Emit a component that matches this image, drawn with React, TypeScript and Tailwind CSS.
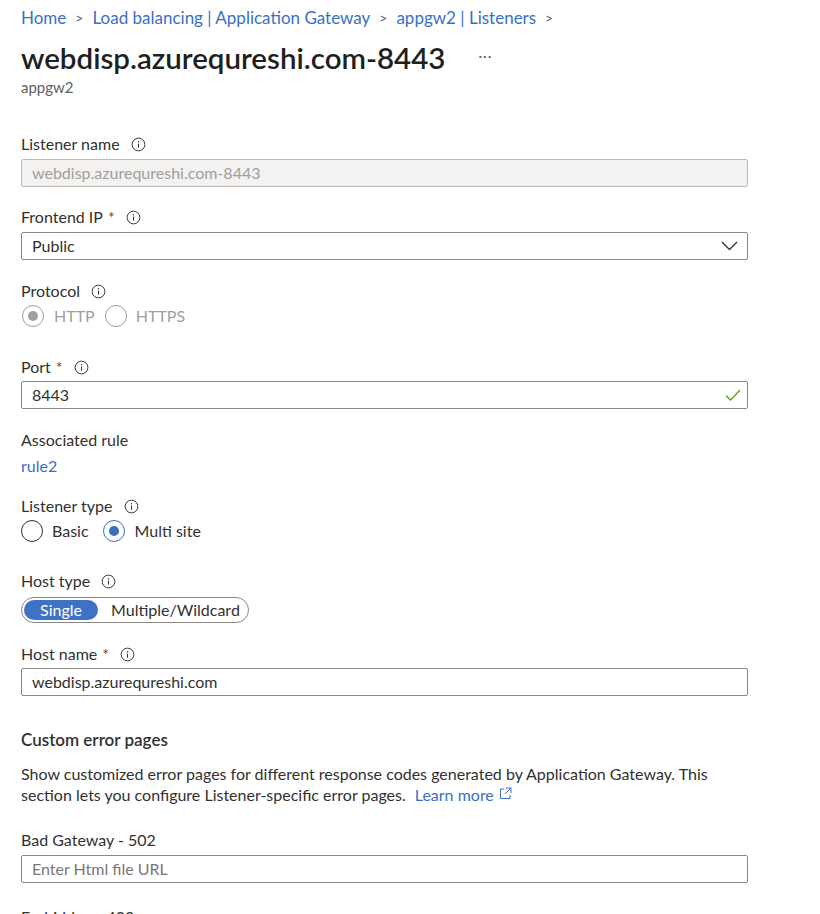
import React from "react";

const font = { fontFamily: "Lato, 'Open Sans', sans-serif" };

function Info() {
  return (
    <svg width="15" height="15" viewBox="0 0 16 16" className="ml-[11px] shrink-0">
      <circle cx="8" cy="8" r="6.8" fill="none" stroke="#323130" strokeWidth="1" />
      <circle cx="8" cy="5.1" r="0.75" fill="#323130" />
      <path d="M8 7v4.4" stroke="#323130" strokeWidth="1.1" />
    </svg>
  );
}

function Label({ text, req, info }: { text: string; req?: boolean; info?: boolean }) {
  return (
    <div className="flex items-center h-[22px] text-[16px] leading-[22px] text-[#323130]">
      <span>{text}</span>
      {req && <span className="text-[#a4262c] ml-[5px]">*</span>}
      {info && <Info />}
    </div>
  );
}

function Radio({ checked, disabled, blue }: { checked?: boolean; disabled?: boolean; blue?: boolean }) {
  const border = disabled ? "border-[#a19f9d]" : blue ? "border-[#3b6fc4]" : "border-[#323130]";
  return (
    <span className={`w-[22px] h-[22px] rounded-full border ${border} flex items-center justify-center bg-white shrink-0`}>
      {checked && (
        <span className={`w-[10px] h-[10px] rounded-full ${disabled ? "bg-[#a19f9d]" : "bg-[#3b6fc4]"}`} />
      )}
    </span>
  );
}

export default function App() {
  return (
    <div className="w-[820px] h-[914px] overflow-hidden bg-white pl-[21px]" style={font}>
      <div className="pt-[6px] flex items-center h-[30px] text-[17px] leading-[24px] text-[#3b6fc4]">
        <span>Home</span>
        <span className="mx-[9px] text-[#605e5c] text-[14px]">&gt;</span>
        <span>Load balancing | Application Gateway</span>
        <span className="mx-[9px] text-[#605e5c] text-[14px]">&gt;</span>
        <span>appgw2 | Listeners</span>
        <span className="mx-[9px] text-[#605e5c] text-[14px]">&gt;</span>
      </div>
      <div className="mt-[10px] flex items-center h-[36px]">
        <span className="text-[29.5px] leading-[36px] font-semibold text-[#201f1e]">webdisp.azurequreshi.com-8443</span>
        <span className="ml-[33px] text-[#605e5c] text-[14px] tracking-[1px] -mt-[6px]">···</span>
      </div>
      <div className="mt-[1px] text-[15px] leading-[20px] text-[#605e5c]">appgw2</div>

      <div className="mt-[36px]"><Label text="Listener name" info /></div>
      <div className="mt-[4px] w-[727px] h-[28px] border border-[#bdbbb8] bg-[#f3f2f1] rounded-[2px] px-[10px] flex items-center text-[16px] text-[#a19f9d]">
        webdisp.azurequreshi.com-8443
      </div>

      <div className="mt-[19px]"><Label text="Frontend IP" req info /></div>
      <div className="mt-[4px] w-[727px] h-[28px] border border-[#8a8886] rounded-[2px] pl-[10px] pr-[9px] flex items-center justify-between text-[16px] text-[#323130]">
        <span>Public</span>
        <svg width="17" height="10" viewBox="0 0 17 10"><path d="M1 1l7.5 7.5L16 1" fill="none" stroke="#323130" strokeWidth="1.3" /></svg>
      </div>

      <div className="mt-[20px]"><Label text="Protocol" info /></div>
      <div className="mt-[2px] h-[24px] flex items-center text-[16px] text-[#a19f9d]">
        <span className="ml-[1px]"><Radio checked disabled /></span>
        <span className="ml-[10px]">HTTP</span>
        <span className="ml-[10px]"><Radio disabled /></span>
        <span className="ml-[9px]">HTTPS</span>
      </div>

      <div className="mt-[28px]"><Label text="Port" req info /></div>
      <div className="mt-[3px] w-[727px] h-[28px] border border-[#8a8886] rounded-[2px] pl-[10px] pr-[6px] flex items-center justify-between text-[16px] text-[#323130]">
        <span>8443</span>
        <svg width="16" height="12" viewBox="0 0 16 12"><path d="M1 6.5l4.5 4.5L15 1" fill="none" stroke="#57a300" strokeWidth="1.3" /></svg>
      </div>

      <div className="mt-[20px]"><Label text="Associated rule" /></div>
      <div className="mt-[4px] h-[22px] text-[16px] leading-[22px] text-[#3b6fc4]">rule2</div>

      <div className="mt-[18px]"><Label text="Listener type" info /></div>
      <div className="mt-[2px] h-[24px] flex items-center text-[16px] text-[#323130]">
        <Radio />
        <span className="ml-[9px]">Basic</span>
        <span className="ml-[14px]"><Radio checked blue /></span>
        <span className="ml-[10px]">Multi site</span>
      </div>

      <div className="mt-[27px]"><Label text="Host type" info /></div>
      <div className="mt-[5px] w-[228px] h-[26px] rounded-full border border-[#8a8886] flex items-center px-[2px] text-[16px]">
        <span className="h-[20px] w-[74px] rounded-full bg-[#3f72c6] text-white flex items-center justify-center leading-[20px]">Single</span>
        <span className="ml-[13px] text-[#323130]">Multiple/Wildcard</span>
      </div>

      <div className="mt-[20px]"><Label text="Host name" req info /></div>
      <div className="mt-[3px] w-[727px] h-[28px] border border-[#8a8886] rounded-[2px] px-[10px] flex items-center text-[16px] text-[#323130]">
        webdisp.azurequreshi.com
      </div>

      <div className="mt-[32px] h-[24px] text-[17px] leading-[24px] font-semibold text-[#323130]">Custom error pages</div>
      <div className="mt-[11px] w-[727px] text-[16px] leading-[21px] text-[#323130]">
        <div>Show customized error pages for different response codes generated by Application Gateway. This</div>
        <div className="flex items-center">
          <span>section lets you configure Listener-specific error pages.</span>
          <span className="ml-[9px] text-[#3b6fc4]">Learn more</span>
          <svg width="13" height="13" viewBox="0 0 13 13" className="ml-[5px] -mt-[3px] shrink-0">
            <path d="M5 2H1.5v9.5H11V8" fill="none" stroke="#3b6fc4" strokeWidth="1" />
            <path d="M7 1h5v5M12 1L6 7" fill="none" stroke="#3b6fc4" strokeWidth="1" />
          </svg>
        </div>
      </div>

      <div className="mt-[24px]"><Label text="Bad Gateway - 502" /></div>
      <div className="mt-[4px] w-[727px] h-[28px] border border-[#8a8886] rounded-[2px] px-[10px] flex items-center text-[16px] text-[#797775]">
        Enter Html file URL
      </div>

      <div className="mt-[23px]"><Label text="Forbidden - 403" /></div>
    </div>
  );
}
